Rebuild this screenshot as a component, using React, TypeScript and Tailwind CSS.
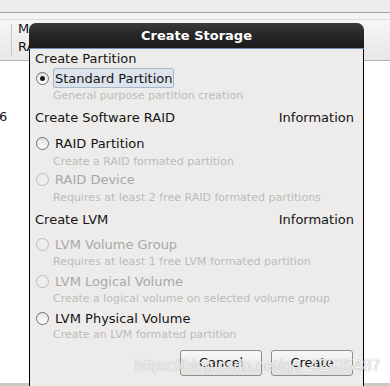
import React from "react";

type Option = {
  label: string;
  desc: string;
  disabled?: boolean;
  selected?: boolean;
  mt: string;
  dmt: string;
};

function Radio({ disabled, selected }: { disabled?: boolean; selected?: boolean }) {
  return (
    <span
      className={`flex h-[13px] w-[13px] shrink-0 items-center justify-center rounded-full border ${
        disabled
          ? "border-[#bdbbb8] bg-[#efeeec]"
          : "border-[#6e6d6b] bg-gradient-to-b from-[#e4e3e1] to-[#ffffff]"
      }`}
    >
      {selected && <span className="h-[5px] w-[5px] rounded-full bg-[#1e1e1e]" />}
    </span>
  );
}

function OptionRow({ opt }: { opt: Option }) {
  return (
    <>
      <div className={`flex h-[20px] items-center gap-[4px] pl-[1px] ${opt.mt}`}>
        <Radio disabled={opt.disabled} selected={opt.selected} />
        <span
          className={`h-[20px] rounded-[2px] border px-[1px] pt-[1px] leading-[17px] ${
            opt.selected ? "border-[#a7b7cb] bg-[#dce3ec]" : "border-transparent"
          } ${opt.disabled ? "text-[#a9a8a6]" : "text-[#141414]"}`}
        >
          {opt.label}
        </span>
      </div>
      <div className={`h-[14px] pl-[18px] text-[11px] leading-[14px] text-[#bcbbb9] ${opt.dmt}`}>
        {opt.desc}
      </div>
    </>
  );
}

function Section({ title, info, mt }: { title: string; info?: boolean; mt: string }) {
  return (
    <div className={`flex h-[16px] items-center justify-between leading-[16px] text-[#141414] ${mt}`}>
      <span>{title}</span>
      {info && <span className="pr-[3px]">Information</span>}
    </div>
  );
}

export default function App() {
  return (
    <div
      className="relative flex h-[386px] w-[390px] flex-col overflow-hidden bg-white text-[13px]"
      style={{ fontFamily: '"DejaVu Sans", "Liberation Sans", sans-serif' }}
    >
      {/* background window */}
      <div className="h-[12px] bg-[#edeceb]" />
      <div className="h-[1px] bg-[#a4a3a1]" />
      <div className="h-[7px] border-b border-[#dcdbd9] bg-[#f4f4f3]" />
      <div className="flex h-[41px] border-b border-[#b3b2b0] bg-gradient-to-b from-[#f6f6f5] to-[#e8e7e5]">
        <div className="w-[11px]" />
        <div className="my-[4px] w-[1px] bg-[#c9c8c6]" />
        <div className="flex flex-col pl-[6px] leading-[18px] text-[#141414]">
          <span>Mount Point/</span>
          <span>RAID/Volume</span>
        </div>
      </div>
      <div className="flex-1 pt-[48px] leading-[16px] text-[#141414]">
        <span className="-ml-[1px]">6</span>
      </div>
      <div className="h-[3px] bg-[#cbc9c6]" />

      {/* dialog */}
      <div className="absolute left-[29px] top-[23px] flex h-[380px] w-[335px] flex-col">
        <div className="flex h-[26px] items-center justify-center rounded-t-[7px] border-b border-[#6f8fb4] bg-gradient-to-b from-[#3a3a3a] via-[#262626] to-[#1b1b1b] text-[13px] font-bold text-white">
          Create Storage
        </div>
        <div className="flex flex-1 flex-col border-x border-black bg-[#edeceb] pl-[5px] pr-[6px]">
          <Section title="Create Partition" mt="mt-[2px]" />
          <OptionRow
            opt={{
              label: "Standard Partition",
              desc: "General purpose partition creation",
              selected: true,
              mt: "mt-[1px]",
              dmt: "mt-[1px]",
            }}
          />
          <Section title="Create Software RAID" info mt="mt-[7px]" />
          <OptionRow
            opt={{
              label: "RAID Partition",
              desc: "Create a RAID formated partition",
              mt: "mt-[7px]",
              dmt: "mt-[2px]",
            }}
          />
          <OptionRow
            opt={{
              label: "RAID Device",
              desc: "Requires at least 2 free RAID formated partitions",
              disabled: true,
              mt: "mt-[0px]",
              dmt: "mt-[2px]",
            }}
          />
          <Section title="Create LVM" info mt="mt-[7px]" />
          <OptionRow
            opt={{
              label: "LVM Volume Group",
              desc: "Requires at least 1 free LVM formated partition",
              disabled: true,
              mt: "mt-[6px]",
              dmt: "mt-[1px]",
            }}
          />
          <OptionRow
            opt={{
              label: "LVM Logical Volume",
              desc: "Create a logical volume on selected volume group",
              disabled: true,
              mt: "mt-[2px]",
              dmt: "mt-[1px]",
            }}
          />
          <OptionRow
            opt={{
              label: "LVM Physical Volume",
              desc: "Create an LVM formated partition",
              mt: "mt-[2px]",
              dmt: "mt-[0px]",
            }}
          />
          <div className="mt-[8px] flex justify-end gap-[9px] pr-[4px]">
            <button className="h-[26px] w-[82px] rounded-[3px] border border-[#8e8d8b] bg-gradient-to-b from-[#f8f8f7] to-[#e4e3e1] text-[#141414]">
              Cancel
            </button>
            <button className="h-[26px] w-[82px] rounded-[3px] border border-[#8e8d8b] bg-gradient-to-b from-[#f8f8f7] to-[#e4e3e1] text-[#141414]">
              Create
            </button>
          </div>
        </div>
      </div>

      {/* watermark */}
      <div
        className="pointer-events-none absolute left-[135px] top-[354px] text-[16px] text-white/90"
        style={{ fontFamily: '"Liberation Sans", sans-serif', textShadow: "0 0 1px rgba(90,90,90,0.7)" }}
      >
        https://blog.csdn.net/qq_42935487
      </div>
    </div>
  );
}
